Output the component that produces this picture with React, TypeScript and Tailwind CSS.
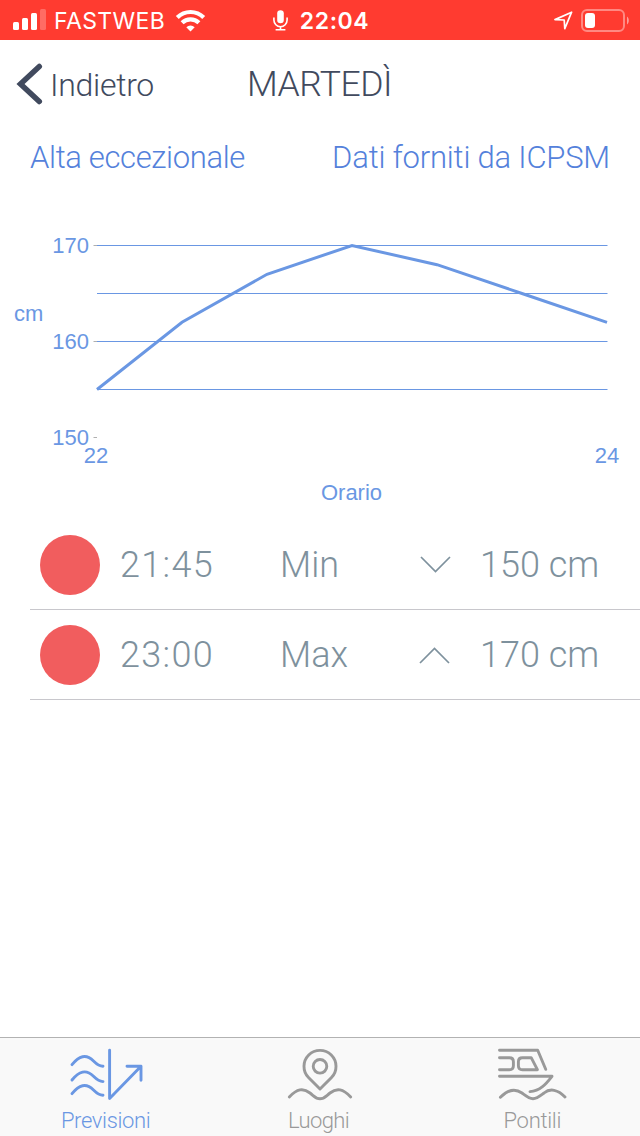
import React from 'react'

const levels = [155, 162, 167, 170, 168, 165, 162]

const tides = [
  { time: '21:45', kind: 'Min', level: '150 cm' },
  { time: '23:00', kind: 'Max', level: '170 cm' },
]

function StatusBar() {
  return (
    <div className="flex h-10 items-center bg-[#ff3b30] pl-[13px] pr-[11px] font-['Inter',sans-serif] text-white">
      <div className="flex flex-1 items-center">
        <svg width="33" height="22" viewBox="0 0 33 22" fill="currentColor">
          <rect x="0" y="13" width="6" height="8" rx="1.5" />
          <rect x="9" y="9" width="6" height="12" rx="1.5" />
          <rect x="18" y="4" width="6" height="17" rx="1.5" />
          <rect x="27" y="0" width="6" height="21" rx="1.5" opacity="0.25" />
        </svg>
        <span className="ml-2 w-[121px] pt-[2px] text-[23px] font-normal leading-none tracking-[0.4px] whitespace-nowrap">
          FASTWEB
        </span>
        <svg width="31" height="23" viewBox="0 0 30 23" fill="none" stroke="currentColor" strokeWidth="4.2">
          <path d="M1.8 8.4a18.8 18.8 0 0 1 26.4 0" />
          <path d="M6.6 13.8a12 12 0 0 1 16.8 0" />
          <path d="M15 22.5l-4.2-4.3a6 6 0 0 1 8.4 0z" fill="currentColor" stroke="none" />
        </svg>
      </div>
      <div className="flex items-center gap-[12px]">
        <svg width="15" height="21" viewBox="0 0 15 21" fill="none" stroke="currentColor" strokeWidth="1.6">
          <rect x="4.2" y="0.3" width="6.6" height="13" rx="3.3" fill="currentColor" stroke="none" />
          <path d="M0.9 7.5v2.6a6.6 6.6 0 0 0 13.2 0V7.5M7.5 16.6v3M2.6 19.8h9.8" />
        </svg>
        <span className="pt-[2px] text-[23px] font-semibold leading-none tracking-[0.6px]">22:04</span>
      </div>
      <div className="flex flex-1 items-center justify-end gap-[8px]">
        <svg width="19" height="19" viewBox="0 0 19 19" fill="none" stroke="currentColor" strokeWidth="1.7" strokeLinejoin="round">
          <path d="M17.6 1.2L1 8.6l9.2 .4 .6 8.6z" />
        </svg>
        <svg width="48" height="23" viewBox="0 0 48 23" fill="none">
          <rect x="1" y="1" width="42" height="21" rx="5" stroke="#fff" strokeOpacity="0.4" strokeWidth="2" />
          <rect x="4" y="4" width="10" height="15" rx="3" fill="#fff" />
          <path d="M46 7.5c2.4 1.6 2.4 6.4 0 8z" fill="#fff" fillOpacity="0.5" />
        </svg>
      </div>
    </div>
  )
}

function TideChart() {
  const points = levels.map((v, i) => `${97 + i * 85},${237.5 - (v - 150) * 9.6}`).join(' ')

  return (
    <svg
      width="640"
      height="315"
      viewBox="0 0 640 315"
      className="block font-['Liberation_Sans',Arial,sans-serif] text-[22px] font-normal"
      fill="#6a97e3"
    >
      <path d="M97 45.5H607.5M97 93.5H607.5M97 141.5H607.5M97 189.5H607.5" stroke="#6a97e3" />
      <path d="M93.5 45.5H97M93.5 141.5H97M93.5 237.5H97" stroke="#b0b0b0" />
      <polyline points={points} fill="none" stroke="#6a97e3" strokeWidth="3" />
      <text x="89" y="53" textAnchor="end">170</text>
      <text x="89" y="149" textAnchor="end">160</text>
      <text x="89" y="245" textAnchor="end">150</text>
      <text x="14" y="121">cm</text>
      <text x="96" y="263" textAnchor="middle">22</text>
      <text x="607" y="263" textAnchor="middle">24</text>
      <text x="351.5" y="300" textAnchor="middle">Orario</text>
    </svg>
  )
}

function Tab({ label, className, children }: { label: React.ReactNode; className: string; children: React.ReactNode }) {
  return (
    <div className={`flex flex-1 flex-col items-center pt-[9px] ${className}`}>
      <svg
        width="80"
        height="56"
        viewBox="0 0 80 56"
        fill="none"
        stroke="currentColor"
        strokeWidth="2.9"
        strokeLinecap="round"
        strokeLinejoin="round"
      >
        {children}
      </svg>
      {label}
    </div>
  )
}

export default function App() {
  return (
    <div className="flex h-[1136px] w-[640px] flex-col overflow-hidden bg-white font-['Roboto',sans-serif] font-light">
      <StatusBar />

      <header className="grid h-[90px] grid-cols-[1fr_auto_1fr] items-center pr-[1px] text-[#414a5e]">
        <div className="flex items-center pl-[16px]">
          <svg width="27" height="44" viewBox="0 0 27 44" fill="none" stroke="currentColor" strokeWidth="5.5" strokeLinecap="round">
            <path d="M23.3 3.5L4.5 21L23.3 38.5" />
          </svg>
          <span className="ml-[7px] text-[32px] leading-none tracking-[-0.3px]">Indietro</span>
        </div>
        <h1 className="text-[35.5px] leading-none tracking-[-0.5px]">MARTEDÌ</h1>
      </header>

      <div className="flex h-[70px] items-start justify-between px-[30px] pt-3 text-[31px] leading-8 text-[#5481db]">
        <span className="tracking-[-0.35px]">Alta eccezionale</span>
        <span className="tracking-[-0.2px]">Dati forniti da ICPSM</span>
      </div>

      <TideChart />

      <ul className="mt-[5px] pl-[30px] text-[36px] leading-none text-[#7e919d]">
        {tides.map((t) => (
          <li key={t.time} className="flex h-[90px] items-center border-b border-[#c8c7cc] pl-[10px]">
            <span className="size-[60px] rounded-full bg-[#f15d5e]" />
            <span className="ml-[20px] w-[160px] tracking-[1.3px]">{t.time}</span>
            <span className="w-[139px]">{t.kind}</span>
            <svg width="32" height="18" viewBox="0 0 32 18" fill="none" stroke="currentColor" strokeWidth="1.7">
              {t.kind === 'Min' ? <path d="M2 1L16.5 15.5L31 1" /> : <path d="M1 17L15.5 2.5L30 17" />}
            </svg>
            <span className="ml-[29px]">{t.level}</span>
          </li>
        ))}
      </ul>

      <nav className="mt-auto flex h-[99px] border-t border-[#b2b2b2] bg-[#f9f9f9] text-[22px] leading-none">
        <Tab className="text-[#6a97e3]" label={<span className="mt-[7px] mr-[2px] tracking-[-0.35px]">Previsioni</span>}>
          <path d="M5 17.7C12 9 19 6.5 26.5 14C29.5 17 32 19.3 36 19.3" />
          <path d="M5 33C12 24.3 19 21.8 26.5 29.3C29.5 32.3 32 34.6 36 34.6" />
          <path d="M5 46.7C12 38 19 35.5 26.5 43C29.5 46 32 48.3 36 48.3" />
          <path d="M42.6 3.3V51.5L74 19.3M60 19.3H74V33.3" />
        </Tab>
        <Tab className="text-[#999]" label={<span className="mt-[7px] mr-[3px] tracking-[-0.6px]">Luoghi</span>}>
          <path d="M40 42L28.5 30.5A16 16 0 1 1 51.5 30.5Z" />
          <circle cx="40" cy="19.3" r="6.8" />
          <path d="M9.3 50C17 42 23 40.5 30 46C35 50 36 51.8 40 51.8S45 50 50 46C57 40.5 63 42 70.7 50" />
        </Tab>
        <Tab className="text-[#999]" label={<span className="mt-[7px] mr-[2px] tracking-[-0.3px]">Pontili</span>}>
          <path d="M6.5 3.3H44.7L52.7 22.3" />
          <path d="M6.5 10.7H16.4Q20.4 10.7 20.4 14.7V18.7Q20.4 22.7 16.4 22.7H6.5" />
          <path d="M38.2 10.7H29.4Q25.4 10.7 25.4 14.7V18.7Q25.4 22.7 29.4 22.7H44.4Z" />
          <path d="M6.5 29.3H59C53 37 47 44 37 44.6" />
          <path d="M7.4 50.3C15 42.5 22 41 29 46C34 49.8 36 51.7 40 51.7S46 49.8 51 46C57 41 65 42.5 72 50" />
        </Tab>
      </nav>
    </div>
  )
}
